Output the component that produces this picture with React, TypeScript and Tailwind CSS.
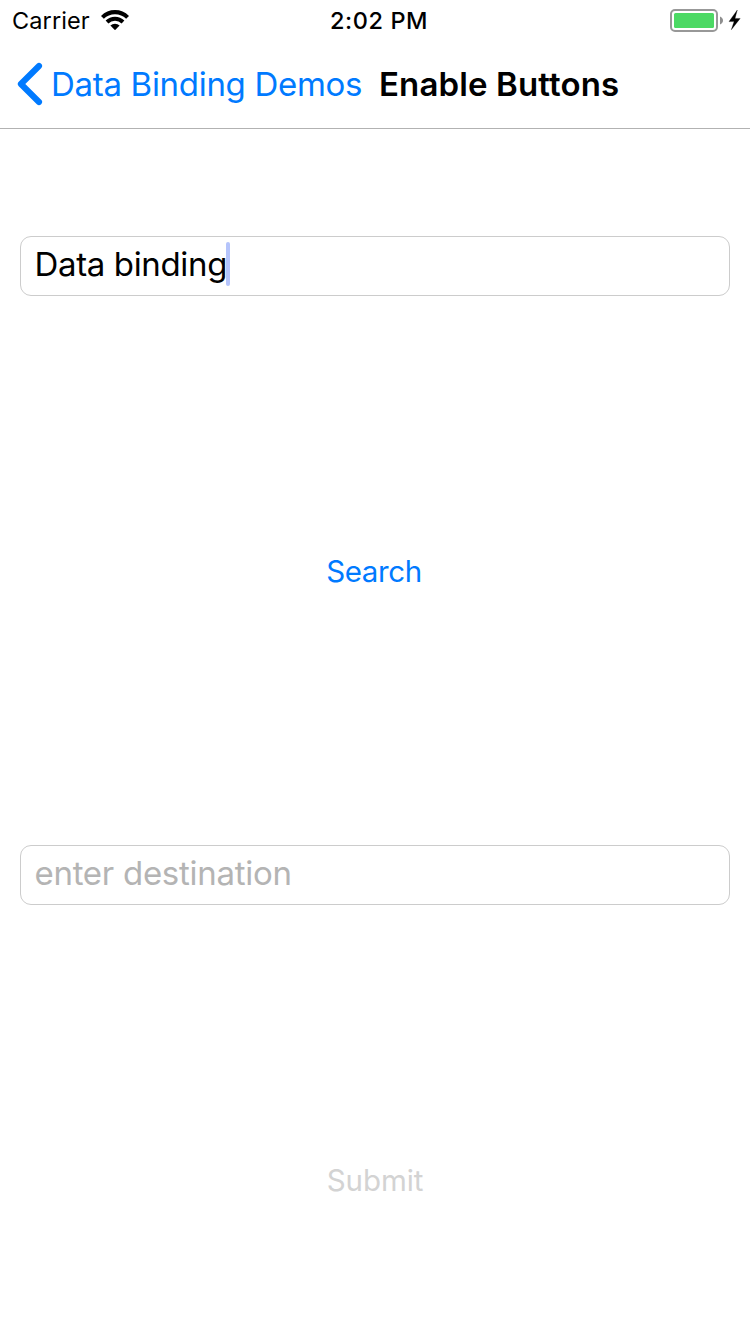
function StatusBar() {
  return (
    <div className="flex h-10 shrink-0 items-center">
      <div className="flex w-[250px] items-center pl-3">
        <span className="w-[89px] pt-0.5 text-[23.5px] leading-10 tracking-[0.1px]">Carrier</span>
        <svg className="h-5 w-7 shrink-0" viewBox="0 0 28 20" fill="none">
          <path d="M1.4 7.4a17.8 17.8 0 0 1 25.2 0" stroke="#000" strokeWidth="4.1" />
          <path d="M6 12a11.3 11.3 0 0 1 16 0" stroke="#000" strokeWidth="3.9" />
          <path d="M14 20.2 9.4 15.6a6.5 6.5 0 0 1 9.2 0z" fill="#000" />
        </svg>
      </div>
      <div className="flex w-[250px] justify-center pl-2">
        <span className="whitespace-nowrap pt-0.5 text-[23.5px] font-medium leading-10 tracking-[0.6px]">2:02 PM</span>
      </div>
      <div className="flex w-[250px] justify-end pr-2">
        <svg className="h-6 w-[74px]" viewBox="0 0 74 24" fill="none">
          <rect x="3" y="2" width="46" height="21" rx="4" stroke="#989898" strokeWidth="2" />
          <rect x="6" y="5" width="40" height="15" rx="1.5" fill="#4cd964" />
          <path d="M52 8.5c4 1.5 4 6.5 0 8z" fill="#8e8e8e" />
          <path d="M69.3 2 61 13.6h5.1L63.3 21.8 72.2 10.4H67z" fill="#000" stroke="#000" strokeWidth="0.3" />
        </svg>
      </div>
    </div>
  );
}

function NavigationBar() {
  return (
    <header className="flex h-[89px] shrink-0 items-center border-b border-[#b2b2b2] pl-4 text-[33px] leading-10">
      <button className="flex items-center whitespace-nowrap text-[#007aff]">
        <svg className="h-11 w-[35px]" viewBox="0 0 35 44" fill="none">
          <path d="M23 4 4.9 22 23 40" stroke="#007aff" strokeWidth="6.1" strokeLinecap="round" strokeLinejoin="round" />
        </svg>
        <span className="w-[328px] text-left tracking-[-0.3px]">Data Binding Demos</span>
      </button>
      <h1 className="whitespace-nowrap font-semibold tracking-[0.13px]">Enable Buttons</h1>
    </header>
  );
}

export default function App() {
  return (
    <main className="flex h-[1334px] w-[750px] flex-col overflow-hidden bg-white font-['Inter',sans-serif] text-black">
      <StatusBar />
      <NavigationBar />
      <section className="flex flex-col px-5 pt-[107px]">
        <div className="flex h-[60px] items-center rounded-[11px] border border-[#cccccc] pl-[13.5px]">
          <span className="pb-1 text-[33px] leading-10 tracking-[-0.35px]">Data binding</span>
          <span className="-ml-px mb-1 h-11 w-1 rounded-sm bg-[#b5c4fb]" />
        </div>
        <button className="mt-[255px] h-10 pr-[2px] text-[29.5px] leading-10 tracking-[-0.38px] text-[#007aff]">Search</button>
        <div className="mt-[254px] flex h-[60px] items-center rounded-[11px] border border-[#cccccc] pl-[13.5px]">
          <span className="pb-1 text-[33px] leading-10 tracking-[-0.28px] text-[#b4b4b4]">enter destination</span>
        </div>
        <button className="mt-[255px] h-10 text-[29.5px] leading-10 tracking-[-0.1px] text-[#d3d3d3]">Submit</button>
      </section>
    </main>
  );
}
